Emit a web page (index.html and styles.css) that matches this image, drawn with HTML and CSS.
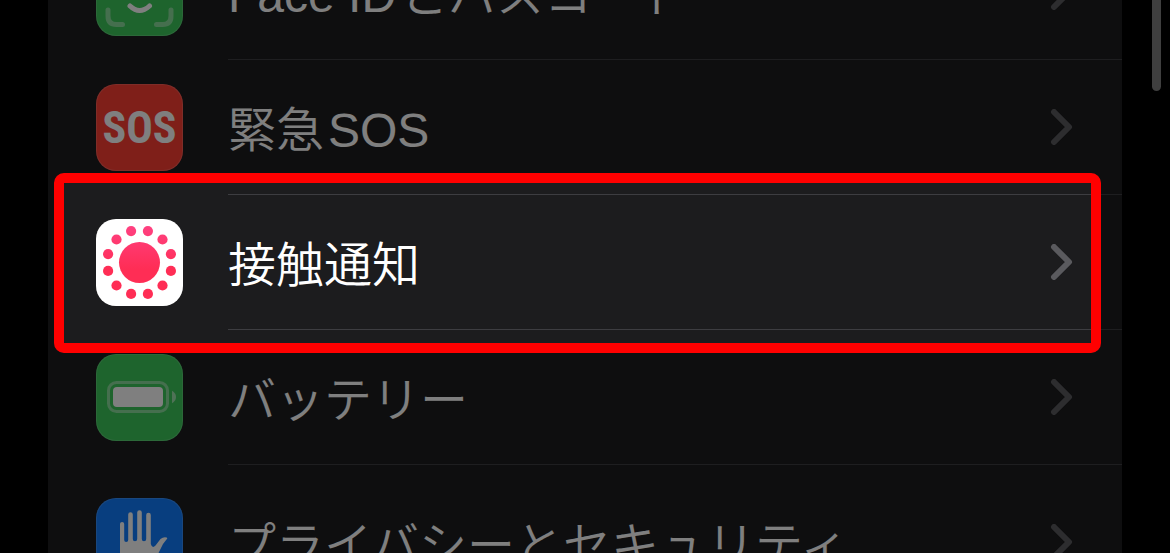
FILE: index.html
```html
<!DOCTYPE html>
<html lang="ja">
<head>
    <meta charset="UTF-8">
    <meta name="viewport" content="width=device-width, initial-scale=1.0">
    <title>設定</title>
    <link rel="stylesheet" href="styles.css">
</head>
<body>
    <main class="screen">
        <nav class="settings-list">
            <a class="row" href="#faceid">
                <svg class="icon icon-green" viewBox="0 0 87 87" aria-hidden="true">
                    <g fill="none" stroke="#fff" stroke-width="5" stroke-linecap="round">
                        <path opacity=".4" d="M12 61v6q0 8.500 8.500 8.500h6M75 61v6q0 8.500 -8.500 8.500h-6M12 26v-6q0 -8.500 8.500 -8.500h6M75 26v-6q0 -8.500 -8.500 -8.500h-6"/>
                        <path d="M34 57q9.500 9 19.500 0M31 32v6M56 32v6M44 32v14h-3"/>
                    </g>
                </svg>
                <span class="row-body">
                    <span class="label"><span class="latin">Face ID</span>とパスコード</span>
                    <svg class="chevron" viewBox="0 0 24 36" aria-hidden="true"><path d="M4 3l15 15L4 33"/></svg>
                </span>
            </a>
            <a class="row" href="#sos">
                <span class="icon icon-red" aria-hidden="true">SOS</span>
                <span class="row-body">
                    <span class="label">緊急<span class="latin">SOS</span></span>
                    <svg class="chevron" viewBox="0 0 24 36" aria-hidden="true"><path d="M4 3l15 15L4 33"/></svg>
                </span>
            </a>
            <a class="row" href="#exposure">
                <svg class="icon icon-white" viewBox="0 0 87 87" aria-hidden="true">
                    <defs>
                        <linearGradient id="pink" gradientUnits="userSpaceOnUse" x1="0" y1="7" x2="0" y2="50">
                            <stop offset="0" stop-color="#ff4181"/>
                            <stop offset="1" stop-color="#ff2d55"/>
                        </linearGradient>
                    </defs>
                    <g fill="url(#pink)">
                        <circle cx="43.500" cy="43.500" r="20.500"/>
                        <circle cx="35.100" cy="12.100" r="5.100"/>
                        <circle cx="51.900" cy="12.100" r="5.100"/>
                        <circle cx="66.500" cy="20.500" r="5.100"/>
                        <circle cx="74.900" cy="35.100" r="5.100"/>
                        <circle cx="74.900" cy="51.900" r="5.100"/>
                        <circle cx="66.500" cy="66.500" r="5.100"/>
                        <circle cx="51.900" cy="74.900" r="5.100"/>
                        <circle cx="35.100" cy="74.900" r="5.100"/>
                        <circle cx="20.500" cy="66.500" r="5.100"/>
                        <circle cx="12.100" cy="51.900" r="5.100"/>
                        <circle cx="12.100" cy="35.100" r="5.100"/>
                        <circle cx="20.500" cy="20.500" r="5.100"/>
                    </g>
                </svg>
                <span class="row-body">
                    <span class="label">接触通知</span>
                    <svg class="chevron" viewBox="0 0 24 36" aria-hidden="true"><path d="M4 3l15 15L4 33"/></svg>
                </span>
                <span class="spotlight"></span>
            </a>
            <a class="row" href="#battery">
                <svg class="icon icon-green" viewBox="0 0 87 87" aria-hidden="true">
                    <rect x="12.500" y="28.500" width="59" height="29" rx="8" fill="none" stroke="#fff" stroke-width="3" opacity=".4"/>
                    <rect x="17" y="33" width="50" height="20" rx="4" fill="#fff"/>
                    <path d="M76 36.800q4 2.200 4 6.200t-4 6.200z" fill="#fff" opacity=".5"/>
                </svg>
                <span class="row-body">
                    <span class="label">バッテリー</span>
                    <svg class="chevron" viewBox="0 0 24 36" aria-hidden="true"><path d="M4 3l15 15L4 33"/></svg>
                </span>
            </a>
            <a class="row row-last" href="#privacy">
                <svg class="icon icon-blue" viewBox="0 0 87 87" aria-hidden="true">
                    <path fill="#fff" d="M24 60V26a2.100 2.100 0 0 1 4.200 0v16a2 2 0 0 0 4 0V16.500a2.300 2.300 0 0 1 4.600 0V41a2.200 2.200 0 0 0 4.400 0V14.500a2.300 2.300 0 0 1 4.600 0V41a2.200 2.200 0 0 0 4.400 0V17a2.300 2.300 0 0 1 4.600 0v29q1.500 5 4.700 1.500l5-6.500q3-2.500 6-1.600 1.500.6 0 2.100l-3.500 4.500L59 62q-4 15-17 15-16 0-18-17z"/>
                </svg>
                <span class="row-body">
                    <span class="label">プライバシーとセキュリティ</span>
                    <svg class="chevron" viewBox="0 0 24 36" aria-hidden="true"><path d="M4 3l15 15L4 33"/></svg>
                </span>
            </a>
        </nav>
        <div class="scroll-thumb"></div>
    </main>
</body>
</html>
```
FILE: styles.css
```css
body {
    margin: 0;
    background: #000;
    color: #fff;
    font-family: "Noto Sans CJK JP", sans-serif;
}
.screen {
    position: relative;
    height: 100vh;
    overflow: hidden;
}
/* list is scrolled part of the way through the first row */
.settings-list {
    margin: -75px 48px 0;
    background: #1c1c1e;
}
.row {
    position: relative;
    display: flex;
    align-items: center;
    gap: 45px;
    min-height: 135px;
    padding-left: 48px;
    color: inherit;
    text-decoration: none;
}
.row-last {
    min-height: 153px;
}
.row-body {
    flex: 1;
    align-self: stretch;
    display: flex;
    align-items: center;
    justify-content: space-between;
    padding-right: 48px;
    border-bottom: 1px solid #3d3d41;
}
.row-last .row-body {
    border-bottom: none;
}
.label {
    padding-bottom: 2px;
    font-size: 48px;
    font-weight: 350;
    line-height: 72px;
    white-space: nowrap;
}
.latin {
    display: inline-block;
    margin: 0 4px;
    font-family: "Liberation Sans", sans-serif;
    font-weight: 400;
    line-height: 1;
}
/* a label that opens with latin text starts flush with the others */
.row:first-child .latin {
    margin-left: 0;
}
.icon {
    flex: none;
    width: 87px;
    height: 87px;
    border-radius: 20px;
    box-shadow: inset 0 0 0 1px rgba(255, 255, 255, 0.15);
}
.icon-green {
    background: #3cc95b;
}
.icon-red {
    display: flex;
    align-items: center;
    justify-content: center;
    background: #ff3e33;
    font-family: "Roboto Condensed", "Open Sans Condensed", Roboto, sans-serif;
    font-size: 44px;
    font-weight: 700;
}
.icon-white {
    background: #fff;
}
.icon-blue {
    background: #107cff;
}
.chevron {
    flex: none;
    width: 24px;
    height: 36px;
    fill: none;
    stroke: #5a5a5e;
    stroke-width: 6;
    stroke-linecap: round;
    stroke-linejoin: round;
}
/* red frame, everything outside it is dimmed */
.spotlight {
    position: absolute;
    z-index: 1;
    top: -22px;
    right: 21px;
    bottom: -23px;
    left: 6px;
    border: 10px solid #f00;
    border-radius: 10px;
    box-shadow: 0 0 0 2000px rgba(0, 0, 0, 0.5);
}
.scroll-thumb {
    position: absolute;
    top: 0;
    right: 9px;
    width: 9px;
    height: 91px;
    border-radius: 0 0 5px 5px;
    background: #7e7e7e;
}
```
